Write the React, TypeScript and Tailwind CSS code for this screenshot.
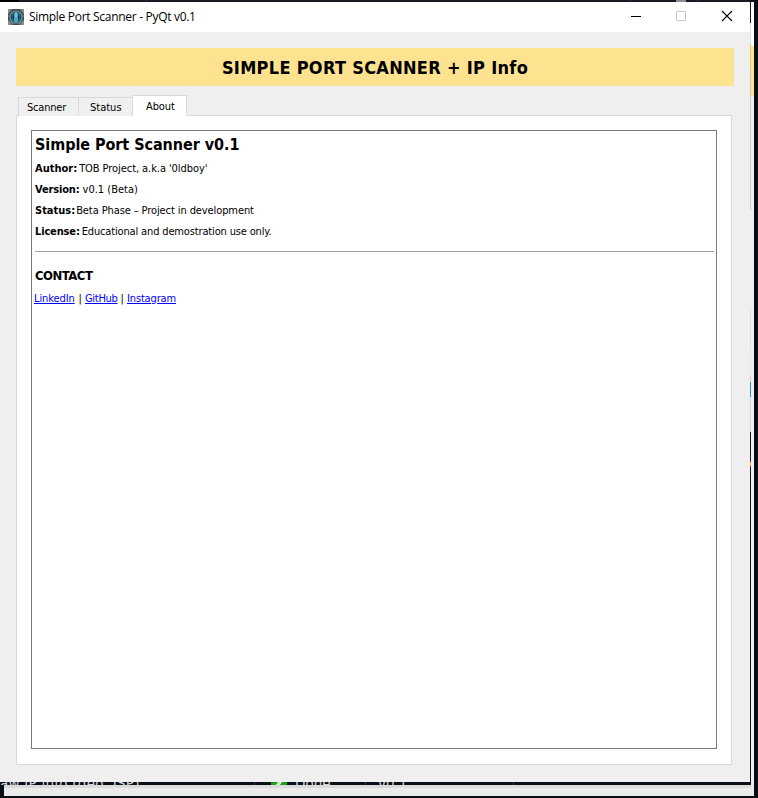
import React from "react";

const ui = "font-['DejaVu_Sans_Condensed','DejaVu_Sans',sans-serif] [font-stretch:condensed]";

function AppIcon() {
  return (
    <svg width="16" height="16" viewBox="0 0 16 16" className="shrink-0">
      <rect width="16" height="16" fill="#3d4f57" />
      <path d="M0 0h4L0 5zM16 0h-4l4 5zM0 16h4l-4-5zM16 16h-4l4-5z" fill="#8b8f8a" />
      <circle cx="8" cy="8" r="6" fill="#18323d" stroke="#78919a" strokeWidth="1.2" />
      <circle cx="8" cy="8" r="4.2" fill="none" stroke="#2b7389" strokeWidth="1.2" />
      <path d="M8 3c2 0 2 2 2 4v5l-2 2-2-2V7c0-2 0-4 2-4z" fill="#48a8c7" />
      <path d="M8 4v4" stroke="#91d7e9" strokeWidth="1" />
      <path d="M1 12l4 3M15 12l-4 3M0 7h2M14 7h2" stroke="#579bac" />
    </svg>
  );
}

function TitleBar() {
  return (
    <header className="flex h-[30px] items-center bg-white pl-2">
      <AppIcon />
      <span className="ml-[5px] whitespace-nowrap font-['Open_Sans','Noto_Sans',sans-serif] text-[12px] leading-[16px] tracking-[-0.3px] text-black [font-stretch:normal]">
        Simple Port Scanner - PyQt v0.1
      </span>
      <svg width="137" height="30" viewBox="0 0 137 30" className="ml-auto shrink-0" shapeRendering="crispEdges">
        <path d="M18 14.5h10" stroke="#000" />
        <rect x="63.5" y="9.5" width="9" height="9" fill="none" stroke="#ccc" />
        <path d="M109 9l10 10M119 9l-10 10" stroke="#000" shapeRendering="auto" strokeWidth="1.1" />
      </svg>
    </header>
  );
}

function Detail({ label, gap, labelTrack, valueTrack, children }: { label: string; gap: string; labelTrack: string; valueTrack: string; children: React.ReactNode }) {
  return (
    <p className="flex h-[21px] items-center whitespace-nowrap text-[11px] leading-[14px]">
      <b className={labelTrack}>{label}</b>
      <span className={`${gap} ${valueTrack}`}>{children}</span>
    </p>
  );
}

function About() {
  return (
    <section className="h-[619px] w-[686px] border border-[#7a7a7a] bg-white pl-[3px] pr-[2px] text-black">
      <h1 className="flex h-[27px] items-center whitespace-nowrap text-[16px] font-bold tracking-[-0.05px]">Simple Port Scanner v0.1</h1>
      <Detail label="Author:" gap="ml-[2px]" labelTrack="tracking-[0px]" valueTrack="tracking-[-0.07px]">TOB Project, a.k.a '0ldboy'</Detail>
      <Detail label="Version:" gap="ml-[3px]" labelTrack="tracking-[-0.15px]" valueTrack="tracking-[0px]">v0.1 (Beta)</Detail>
      <Detail label="Status:" gap="ml-[1px]" labelTrack="tracking-[0px]" valueTrack="tracking-[-0.1px]">Beta Phase – Project in development</Detail>
      <Detail label="License:" gap="ml-[2px]" labelTrack="tracking-[-0.15px]" valueTrack="tracking-[-0.15px]">Educational and demostration use only.</Detail>
      <hr className="mt-[9px] border-[#a0a0a0]" />
      <h2 className="mt-[15px] flex h-[18px] items-center text-[13px] font-bold tracking-[-0.5px]">CONTACT</h2>
      <nav className="-ml-px mt-[6px] flex h-[16px] items-center whitespace-nowrap text-[11px] tracking-[-0.1px]">
        <a className="w-[41px] text-[#0000ff] underline">LinkedIn</a>
        <span className="w-[10px] text-center">|</span>
        <a className="w-[32px] tracking-[-0.3px] text-[#0000ff] underline">GitHub</a>
        <span className="w-[10px] text-center">|</span>
        <a className="tracking-[-0.15px] text-[#0000ff] underline">Instagram</a>
      </nav>
    </section>
  );
}

function DesktopEdge() {
  return (
    <aside className="flex h-[798px] w-[8px] bg-[#080d14]">
      <div className="flex w-px flex-col">
        <i className="h-[23px] bg-[#11151d]" />
        <i className="h-[21px] bg-[#dedede]" />
        <i className="h-[26px] bg-[#e5c66f]" />
        <i className="h-[140px] bg-[#cbcbcb]" />
        <i className="h-[99px] bg-[#efefef]" />
        <i className="h-[40px] bg-[#e1e1e1]" />
        <i className="h-[27px] bg-[#eaeaea]" />
        <i className="h-[6px] bg-[#cecece]" />
        <i className="h-[15px] bg-[#3288ca]" />
        <i className="h-[35px] bg-[#d1d1d1]" />
        <i className="h-[29px] bg-[#14171b]" />
        <i className="h-px bg-[#b32b20]" />
        <i className="h-[4px] bg-[#e6a51b]" />
        <i className="h-px bg-[#b32b20]" />
        <i className="h-[318px] bg-[#14191f]" />
        <i className="h-[3px] bg-[#dadada]" />
        <i className="h-[8px] bg-[#ebebeb]" />
      </div>
      <div className="mt-[2px] flex h-[794px] w-[3px] flex-col bg-[#ebebeb]">
        <i className="h-[44px] bg-white" />
        <i className="h-[50px] bg-[#fde38f]" />
        <i className="flex-1 bg-[#efefef]" />
        <i className="h-[11px] bg-[#ebebeb]" />
      </div>
    </aside>
  );
}

export default function App() {
  return (
    <div className={`flex h-[798px] w-[758px] overflow-hidden bg-[#0a0e15] ${ui}`}>
      <div className="flex w-[750px] flex-col">
        <div className="flex h-[2px] bg-[#171923]">
          <i className="w-[19px] bg-black" />
          <i className="ml-[127px] w-px bg-[#30333c]" />
          <i className="ml-[483px] w-px bg-[#30333c]" />
          <i className="ml-[45px] w-[10px] bg-[#8b8c94]" />
          <i className="ml-[11px] w-px bg-[#30333c]" />
        </div>
        <main className="h-[780px] bg-[#efefef]">
          <TitleBar />
          <div className="pl-4 pt-4">
            <div className="flex h-[38px] w-[718px] items-center justify-center whitespace-nowrap bg-[#fde38f] text-[18px] font-bold tracking-[0.3px] text-black">
              SIMPLE PORT SCANNER + IP Info
            </div>
            <div className="mt-[9px] flex h-[21px] items-end pl-[2px] text-[11px] leading-[14px] text-black">
              <div className="flex h-[19px] w-[61px] items-center border border-b-0 border-[#d9d9d9] bg-[#f0f0f0] pl-[8px] pt-[2px] tracking-[-0.2px]">Scanner</div>
              <div className="flex h-[19px] w-[53px] items-center border border-b-0 border-l-0 border-r-0 border-[#d9d9d9] bg-[#f0f0f0] pl-[11px] pt-[2px] tracking-[0px]">Status</div>
              <div className="z-10 flex h-[21px] w-[55px] items-center border border-b-0 border-[#d9d9d9] bg-white pl-[13px] pt-[2px] tracking-[-0.1px]">About</div>
            </div>
            <div className="-mt-px h-[650px] w-[716px] border border-[#d9d9d9] bg-white pl-[14px] pt-[14px]">
              <About />
            </div>
          </div>
        </main>
        <div className="flex h-[3px] overflow-hidden bg-[#0b1018] text-[15px] leading-[14px] text-[#d0d5da]">
          <span className="-mt-[5px] w-[254px] whitespace-nowrap tracking-[0.25px]">aw IP info (geo, ISP)</span>
          <i className="w-px bg-[#30363d]" />
          <i className="ml-[16px] flex w-[16px] justify-center bg-[#16a41a]"><i className="h-[3px] w-[4px] -skew-x-[35deg] bg-[#d5f4d6]" /></i>
          <span className="-mt-[5px] ml-[8px] w-[70px]">Done</span>
          <i className="w-px bg-[#30363d]" />
          <span className="-mt-[5px] ml-[12px] w-[135px]">v0.1</span>
          <i className="w-px bg-[#30363d]" />
        </div>
        <div className="ml-[4px] h-[3px] bg-[#dadada]" />
        <div className="ml-[4px] h-[8px] bg-[#ebebeb]" />
      </div>
      <DesktopEdge />
    </div>
  );
}
